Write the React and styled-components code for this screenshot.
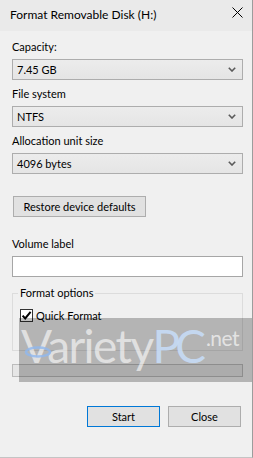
import React from "react";
import styled, { createGlobalStyle } from "styled-components";

const GlobalStyle = createGlobalStyle`
  body {
    margin: 0;
    background: #f0f0f0;
    font-family: Lato, "Liberation Sans", sans-serif;
  }
`;

const fields = [
  { label: "Capacity:", value: "7.45 GB" },
  { label: "File system", value: "NTFS" },
  { label: "Allocation unit size", value: "4096 bytes" },
];

const App = () => {
  return (
    <Window>
      <GlobalStyle />
      <TitleBar>
        <Title>Format Removable Disk (H:)</Title>
        <CloseIcon width="11" height="11" viewBox="0 0 11 11">
          <path d="M0.5 0.5 L10.5 10.5 M10.5 0.5 L0.5 10.5" stroke="#000" strokeWidth="1" />
        </CloseIcon>
      </TitleBar>

      <Body>
        {fields.map((f) => (
          <Field key={f.label}>
            <Label>{f.label}</Label>
            <Select>
              <span>{f.value}</span>
              <svg width="8" height="5" viewBox="0 0 8 5">
                <path d="M0.8 0.8 L4 4 L7.2 0.8" fill="none" stroke="#5a5a5a" strokeWidth="1.6" />
              </svg>
            </Select>
          </Field>
        ))}

        <RestoreButton>Restore device defaults</RestoreButton>

        <Field $top={19}>
          <Label>Volume label</Label>
          <TextInput />
        </Field>

        <Group>
          <Legend>Format options</Legend>
          <CheckRow>
            <CheckBox>
              <svg width="11" height="11" viewBox="0 0 11 11">
                <path d="M1.6 5.6 L4.2 8.4 L9.6 1.8" fill="none" stroke="#000" strokeWidth="2" />
              </svg>
            </CheckBox>
            <span>Quick Format</span>
          </CheckRow>
        </Group>

        <Progress />

        <ButtonRow>
          <DialogButton $primary>Start</DialogButton>
          <DialogButton>Close</DialogButton>
        </ButtonRow>
      </Body>

      <Watermark>
        <Swoosh width="30" height="14" viewBox="0 0 30 14">
          <ellipse cx="15" cy="7" rx="12" ry="4.5" fill="none" stroke="#8fb8f0" strokeWidth="2.5" />
        </Swoosh>
        <MarkText>Variety</MarkText>
        <MarkText $blue>PC</MarkText>
        <MarkNet>.net</MarkNet>
      </Watermark>
    </Window>
  );
};

const Window = styled.div`
  position: relative;
  width: 253px;
  height: 458px;
  box-sizing: border-box;
  background: #f0f0f0;
  border-right: 1px solid #9c9c9c;
  border-bottom: 1px solid #c4c4c4;
  overflow: hidden;
  color: #000;
`;

const TitleBar = styled.div`
  height: 31px;
  box-sizing: border-box;
  display: flex;
  justify-content: space-between;
  align-items: flex-start;
  padding: 7px 9px 0 10px;
  background: #eaeaea;
`;

const Title = styled.div`
  font-size: 12px;
  line-height: 16px;
`;

const CloseIcon = styled.svg`
  display: block;
`;

const Body = styled.div`
  display: flex;
  flex-direction: column;
  padding: 8px 9px 0 12px;
  font-size: 11px;
`;

const Field = styled.div`
  display: flex;
  flex-direction: column;
  margin-top: ${(p) => (p.$top !== undefined ? p.$top : 0)}px;
  margin-bottom: 6px;
`;

const Label = styled.label`
  line-height: 16px;
  margin-bottom: 4px;
`;

const Select = styled.div`
  height: 21px;
  box-sizing: border-box;
  display: flex;
  align-items: center;
  justify-content: space-between;
  padding: 0 6px 0 4px;
  border: 1px solid #adadad;
  background: linear-gradient(#ececec, #e5e5e5);

  svg {
    display: block;
  }
`;

const RestoreButton = styled.div`
  align-self: flex-start;
  margin: 16px 0 0 1px;
  width: 133px;
  height: 21px;
  box-sizing: border-box;
  display: flex;
  align-items: center;
  justify-content: center;
  border: 1px solid #adadad;
  background: #e1e1e1;
`;

const TextInput = styled.div`
  height: 21px;
  box-sizing: border-box;
  border: 1px solid #a6a6a6;
  background: #fff;
`;

const Group = styled.fieldset`
  margin: 2px 0 0;
  padding: 6px 0 27px 7px;
  border: 1px solid #dcdcdc;
  min-width: 0;
`;

const Legend = styled.legend`
  padding: 0 2px;
  margin-left: -2px;
  line-height: 16px;
  font-size: 11px;
`;

const CheckRow = styled.div`
  display: flex;
  align-items: center;
  gap: 3px;
  height: 16px;
  font-size: 11px;
`;

const CheckBox = styled.span`
  width: 13px;
  height: 13px;
  box-sizing: border-box;
  display: flex;
  align-items: center;
  justify-content: center;
  border: 1px solid #333;
  background: #fff;
`;

const Progress = styled.div`
  margin-top: 13px;
  height: 13px;
  box-sizing: border-box;
  border: 1px solid #bcbcbc;
  background: #e6e6e6;
`;

const ButtonRow = styled.div`
  display: flex;
  justify-content: flex-end;
  gap: 8px;
  margin: 29px 2px 0 0;
`;

const DialogButton = styled.div`
  width: 73px;
  height: 21px;
  box-sizing: border-box;
  display: flex;
  align-items: center;
  justify-content: center;
  font-size: 11px;
  border: 1px solid ${(p) => (p.$primary ? "#0078d7" : "#adadad")};
  background: #e1e1e1;
`;

const Watermark = styled.div`
  position: absolute;
  left: 19px;
  top: 318px;
  right: 0;
  height: 64px;
  box-sizing: border-box;
  padding: 5px 0 0 2px;
  background: rgba(0, 0, 0, 0.25);
  white-space: nowrap;
  font-family: Lato, "Liberation Sans", sans-serif;
  pointer-events: none;
`;

const MarkText = styled.span`
  font-size: 46px;
  line-height: 46px;
  color: ${(p) => (p.$blue ? "rgba(200, 222, 250, 0.85)" : "rgba(255, 255, 255, 0.6)")};
  letter-spacing: ${(p) => (p.$blue ? "-5px" : "-1.6px")};
`;

const MarkNet = styled.span`
  font-size: 21px;
  line-height: 21px;
  vertical-align: 17px;
  margin-left: 5px;
  letter-spacing: -0.5px;
  color: rgba(255, 255, 255, 0.65);
`;

const Swoosh = styled.svg`
  position: absolute;
  left: 4px;
  top: 27px;
  filter: blur(0.6px);
  opacity: 0.8;
`;

export default App;
